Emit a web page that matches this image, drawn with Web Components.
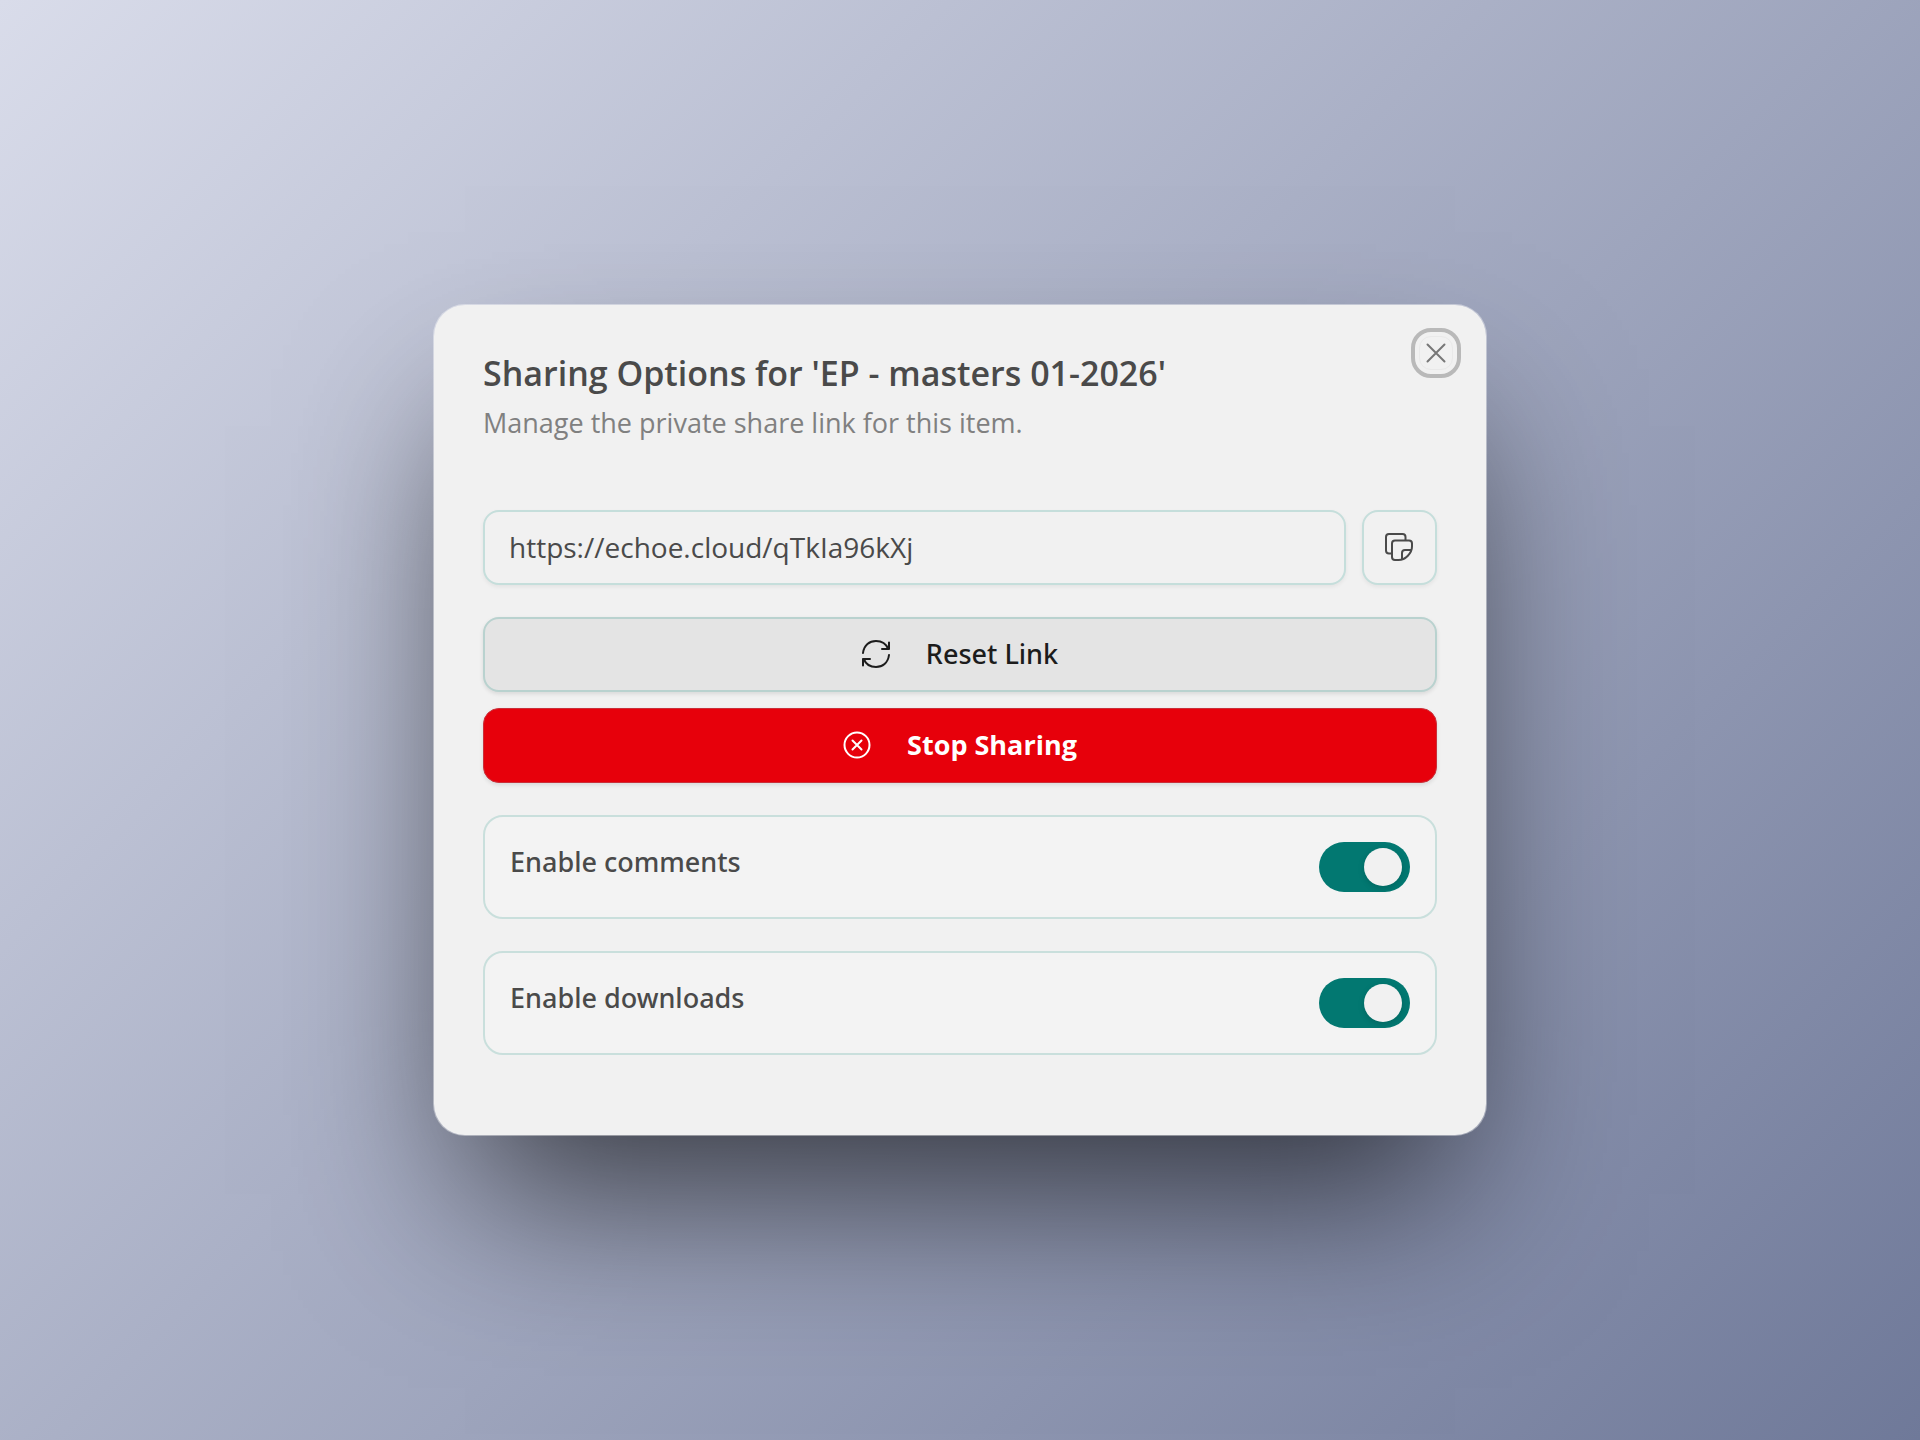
<!DOCTYPE html>
<html lang="en">
<head>
<meta charset="utf-8">
<meta name="viewport" content="width=device-width, initial-scale=1">
<title>Sharing Options</title>
<style>
  body {
    margin: 0;
    color: #4a4a4a;
    font: 400 28px/40px "Open Sans", "Noto Sans", sans-serif;
  }
</style>
</head>
<body>
<share-page>
  <share-dialog>
    <span slot="title">Sharing Options for 'EP - masters 01-2026'</span>
    <span slot="description">Manage the private share link for this item.</span>
    <share-link value="https://echoe.cloud/qTkIa96kXj"></share-link>
    <action-group>
      <action-button icon="reset">Reset Link</action-button>
      <action-button icon="stop" variant="danger">Stop Sharing</action-button>
    </action-group>
    <toggle-row checked>Enable comments</toggle-row>
    <toggle-row checked>Enable downloads</toggle-row>
  </share-dialog>
</share-page>

<script>
const icons = {
  close: `<svg viewBox="0 0 20 20" width="20" height="20" fill="none" stroke="currentColor" stroke-width="2" stroke-linecap="round" aria-hidden="true">
    <path d="M1.5 1.5l17 17M18.5 1.5l-17 17"/></svg>`,
  copy: `<svg viewBox="0 0 28 28" width="28" height="28" fill="none" stroke="currentColor" stroke-width="2" stroke-linejoin="round" aria-hidden="true">
    <path d="M7 20.500H4a3 3 0 0 1-3-3V4a3 3 0 0 1 3-3h13.500a3 3 0 0 1 3 3v3.500"/>
    <path d="M10 7.500h14a3 3 0 0 1 3 3v3C27 20 20.500 27 13.500 27H10a3 3 0 0 1-3-3V10.500a3 3 0 0 1 3-3z"/>
    <path d="M17 26.500V20a3 3 0 0 1 3-3h6.500"/></svg>`,
  reset: `<svg viewBox="0 0 28 28" width="28" height="28" fill="none" stroke="currentColor" stroke-width="2" stroke-linecap="round" stroke-linejoin="round" aria-hidden="true">
    <path d="M1 13C2 5 7.500 1 14 1c5.500 0 10.300 3.200 12.300 8"/>
    <path d="M27 2.500V9h-7"/>
    <path d="M27 15c-1 8-6.500 12-13 12C8.500 27 3.700 23.800 1.700 19"/>
    <path d="M1 25.500V19h7"/></svg>`,
  stop: `<svg viewBox="0 0 28 28" width="28" height="28" fill="none" stroke="currentColor" stroke-width="2" stroke-linecap="round" aria-hidden="true">
    <circle cx="14" cy="14" r="12.500"/>
    <path d="M9.500 9.500l9 9M18.500 9.500l-9 9"/></svg>`
};

class SharePage extends HTMLElement {
  constructor() {
    super();
    this.attachShadow({ mode: "open" });
  }

  connectedCallback() {
    this.shadowRoot.innerHTML = `
      <style>
        :host {
          display: flex;
          align-items: center;
          justify-content: center;
          box-sizing: border-box;
          min-height: 100vh;
          padding: 24px;
          background: linear-gradient(135deg, #d9dcea, #6f7999);
        }
      </style>
      <slot></slot>
    `;
  }
}

class ShareDialog extends HTMLElement {
  constructor() {
    super();
    this.attachShadow({ mode: "open" });
  }

  connectedCallback() {
    this.shadowRoot.innerHTML = `
      <style>
        :host {
          display: block;
          position: relative;
          box-sizing: border-box;
          width: 100%;
          max-width: 1054px;
          padding: 48px 49px 80px;
          border: 1px solid rgba(255, 255, 255, 0.4);
          border-radius: 32px;
          background: #f1f1f1;
          background-clip: padding-box;
          box-shadow: 0 90px 160px -32px rgba(0, 0, 0, 0.65);
        }
        h2 {
          margin: 0;
          font-size: 34px;
          line-height: 40px;
          font-weight: 600;
        }
        p {
          margin: 10px 0 0;
          color: #808080;
          font-size: 27px;
        }
        .body {
          display: flex;
          flex-direction: column;
          gap: 32px;
          margin-top: 67px;
        }
        .close {
          position: absolute;
          top: 31px;
          right: 33px;
          display: grid;
          place-items: center;
          width: 34px;
          height: 34px;
          padding: 0;
          border: 1px solid #e9e9e9;
          border-radius: 12px;
          outline: 4px solid #b9b9b9;
          outline-offset: 4px;
          background: none;
          color: #777;
        }
      </style>
      <h2><slot name="title"></slot></h2>
      <p><slot name="description"></slot></p>
      <div class="body"><slot></slot></div>
      <button class="close" type="button" aria-label="Close">${icons.close}</button>
    `;
  }
}

class ShareLink extends HTMLElement {
  constructor() {
    super();
    this.attachShadow({ mode: "open" });
  }

  connectedCallback() {
    this.shadowRoot.innerHTML = `
      <style>
        :host {
          display: flex;
          gap: 16px;
        }
        input, button {
          box-sizing: border-box;
          height: 75px;
          border: 2px solid #c5dedb;
          border-radius: 16px;
          background: #f1f1f1;
          color: inherit;
          font: inherit;
          box-shadow: 0 2px 4px rgba(0, 0, 0, 0.06);
        }
        input {
          flex: 1;
          min-width: 0;
          padding: 0 24px 2px;
        }
        button {
          display: grid;
          place-items: center;
          width: 75px;
          padding: 0 2px 2px 0;
        }
      </style>
      <input type="text" readonly aria-label="Share link" value="${this.getAttribute("value")}">
      <button type="button" aria-label="Copy link">${icons.copy}</button>
    `;
    this.shadowRoot.querySelector("button").addEventListener("click", () => {
      this.shadowRoot.querySelector("input").select();
      document.execCommand("copy");
    });
  }
}

class ActionGroup extends HTMLElement {
  constructor() {
    super();
    this.attachShadow({ mode: "open" });
  }

  connectedCallback() {
    this.shadowRoot.innerHTML = `
      <style>
        :host {
          display: flex;
          flex-direction: column;
          gap: 16px;
        }
      </style>
      <slot></slot>
    `;
  }
}

class ActionButton extends HTMLElement {
  constructor() {
    super();
    this.attachShadow({ mode: "open" });
  }

  connectedCallback() {
    this.shadowRoot.innerHTML = `
      <style>
        :host {
          display: block;
        }
        button {
          display: flex;
          align-items: center;
          justify-content: center;
          gap: 36px;
          box-sizing: border-box;
          width: 100%;
          height: 75px;
          padding: 0 0 2px;
          border: 2px solid #b9d2cf;
          border-radius: 16px;
          background: #e4e4e4;
          color: #1c1c1c;
          font: 500 27px/40px "Noto Sans", "Open Sans", sans-serif;
          box-shadow: 0 2px 4px rgba(0, 0, 0, 0.1);
        }
        :host([variant="danger"]) button {
          border: 1px solid #c9303a;
          background: #e7000b;
          color: #fff;
          font-family: "Open Sans", "Noto Sans", sans-serif;
          font-weight: 700;
        }
      </style>
      <button type="button">${icons[this.getAttribute("icon")]}<slot></slot></button>
    `;
  }
}

class ToggleRow extends HTMLElement {
  constructor() {
    super();
    this.attachShadow({ mode: "open" });
  }

  connectedCallback() {
    this.shadowRoot.innerHTML = `
      <style>
        :host {
          display: flex;
          align-items: flex-start;
          justify-content: space-between;
          box-sizing: border-box;
          padding: 25px;
          border: 2px solid #c9dfdc;
          border-radius: 20px;
          background: #f3f3f3;
        }
        label {
          font: 500 27px/40px "Noto Sans", "Open Sans", sans-serif;
        }
        input {
          appearance: none;
          display: flex;
          align-items: center;
          box-sizing: border-box;
          width: 91px;
          height: 50px;
          margin: 0;
          padding: 0 8px;
          border-radius: 25px;
          background: #a8a8a8;
        }
        input::before {
          content: "";
          width: 38px;
          height: 38px;
          border-radius: 50%;
          background: #f1f1f1;
          box-shadow: 0 2px 6px rgba(0, 0, 0, 0.15);
        }
        input:checked {
          justify-content: flex-end;
          background: #027871;
        }
      </style>
      <label for="toggle"><slot></slot></label>
      <input id="toggle" type="checkbox" role="switch" ${this.hasAttribute("checked") ? "checked" : ""}>
    `;
  }
}

customElements.define("share-page", SharePage);
customElements.define("share-dialog", ShareDialog);
customElements.define("share-link", ShareLink);
customElements.define("action-group", ActionGroup);
customElements.define("action-button", ActionButton);
customElements.define("toggle-row", ToggleRow);
</script>
</body>
</html>
